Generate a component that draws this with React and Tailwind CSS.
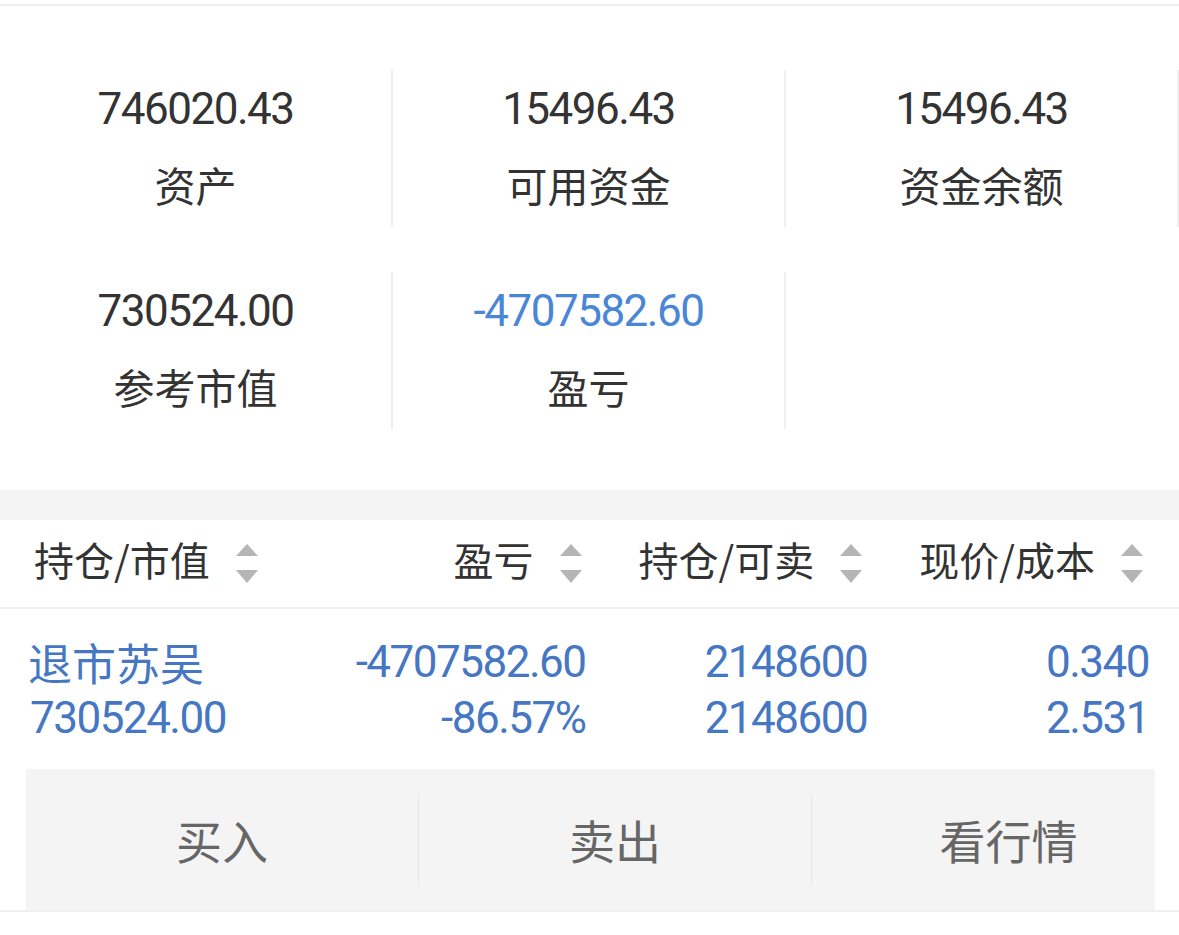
import React from 'react'

const NUM = "font-['Roboto',sans-serif] tracking-[-1.5px]"
const CJK = "font-['Noto_Sans_CJK_SC','Noto_Sans',sans-serif]"

const stats = [
  { value: '746020.43', label: '资产' },
  { value: '15496.43', label: '可用资金' },
  { value: '15496.43', label: '资金余额' },
  { value: '730524.00', label: '参考市值' },
  { value: '-4707582.60', label: '盈亏', blue: true },
]

function SortIcon() {
  return (
    <svg width="22" height="40" viewBox="0 0 22 40" className="ml-[26px] shrink-0">
      <path d="M11 0 L22 12 L0 12 Z" fill="#b5b5b5" />
      <path d="M0 26 L22 26 L11 39 Z" fill="#b5b5b5" />
    </svg>
  )
}

function StatCell({ value, label, blue }) {
  return (
    <div className="h-[157px] border-r-2 border-[#efefef] flex flex-col items-center justify-center">
      <div className={`${NUM} text-[44px] leading-none ${blue ? 'text-[#4a86d6]' : 'text-[#333]'} -mt-[5px]`}>
        {value}
      </div>
      <div className={`${CJK} text-[41px] leading-none text-[#333] mt-[33px]`}>{label}</div>
    </div>
  )
}

export default function App() {
  return (
    <div className="w-[1179px] h-[935px] bg-white overflow-hidden">
      <div className="h-[4px]" />
      <div className="h-[2px] bg-[#efefef]" />

      {/* account summary */}
      <div className="grid grid-cols-3 gap-y-[45px] pt-[64px] pb-[61px]">
        {stats.map((s, i) => (
          <StatCell key={i} {...s} />
        ))}
        <div className="h-[157px]" />
      </div>

      <div className="h-[30px] bg-[#f4f4f4]" />

      {/* table header */}
      <div className={`${CJK} h-[89px] px-[30px] grid grid-cols-4 items-center text-[40px] text-[#333] border-b-2 border-[#efefef]`}>
        <div className="flex items-center pl-[4px]">
          <span className="-mt-[10px]">持仓/市值</span>
          <SortIcon />
        </div>
        <div className="flex items-center justify-end pr-[8px]">
          <span className="-mt-[10px]">盈亏</span>
          <SortIcon />
        </div>
        <div className="flex items-center justify-end pr-[7px]">
          <span className="-mt-[10px]">持仓/可卖</span>
          <SortIcon />
        </div>
        <div className="flex items-center justify-end pr-[6px]">
          <span className="-mt-[10px]">现价/成本</span>
          <SortIcon />
        </div>
      </div>

      {/* position row */}
      <div className="h-[160px] px-[30px] pt-[28px] grid grid-cols-4 text-[#4677c2]">
        <div className="flex flex-col">
          <span className={`${CJK} text-[44px] leading-[50px] -ml-[2px]`}>退市苏吴</span>
          <span className={`${NUM} text-[44px] leading-[62px]`}>730524.00</span>
        </div>
        <div className={`${NUM} flex flex-col items-end text-[44px] mr-[4px]`}>
          <span className="leading-[50px]">-4707582.60</span>
          <span className="leading-[62px]">-86.57%</span>
        </div>
        <div className={`${NUM} flex flex-col items-end text-[44px] mr-[2px]`}>
          <span className="leading-[50px]">2148600</span>
          <span className="leading-[62px]">2148600</span>
        </div>
        <div className={`${NUM} flex flex-col items-end text-[44px]`}>
          <span className="leading-[50px]">0.340</span>
          <span className="leading-[62px]">2.531</span>
        </div>
      </div>

      {/* actions */}
      <div className="border-b-2 border-[#efefef]">
        <div className="ml-[26px] mr-[24px] h-[141px] bg-[#f4f4f4] overflow-hidden">
          <div className={`${CJK} w-[1179px] h-full grid grid-cols-3 items-center text-[46px] text-[#666]`}>
            <div className="h-[90px] flex items-center justify-center border-r border-[#e6e6e6]">买入</div>
            <div className="h-[90px] flex items-center justify-center border-r border-[#e6e6e6]">卖出</div>
            <div className="h-[90px] flex items-center justify-center">看行情</div>
          </div>
        </div>
      </div>
    </div>
  )
}
